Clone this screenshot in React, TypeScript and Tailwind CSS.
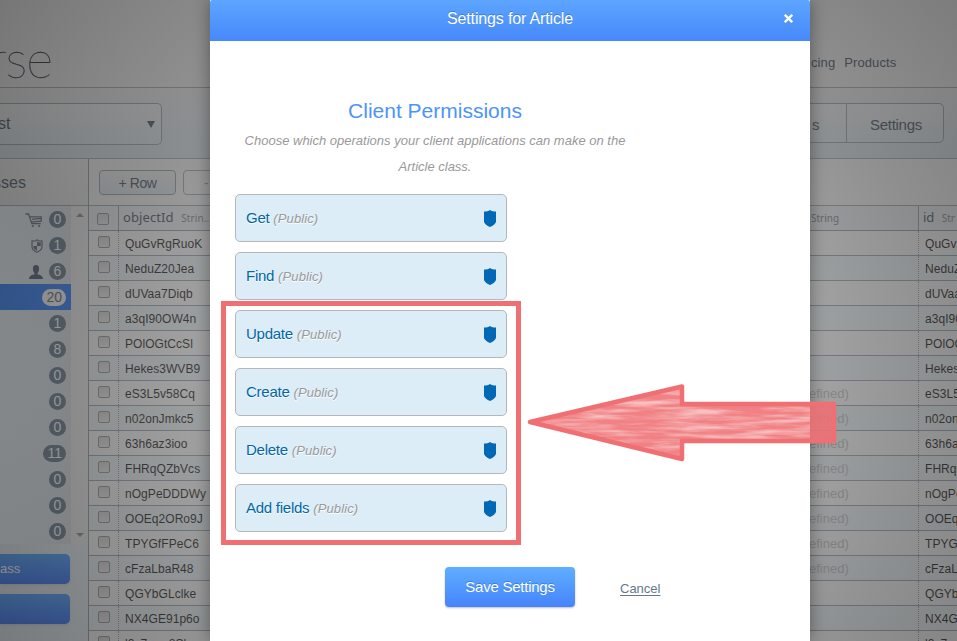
import React from "react";

const ids = [
  "QuGvRgRuoK", "NeduZ20Jea", "dUVaa7Diqb", "a3qI90OW4n", "POlOGtCcSl", "Hekes3WVB9",
  "eS3L5v58Cq", "n02onJmkc5", "63h6az3ioo", "FHRqQZbVcs", "nOgPeDDDWy", "OOEq2ORo9J",
  "TPYGfFPeC6", "cFzaLbaR48", "QGYbGLclke", "NX4GE91p6o", "l2c7wnc8Sk",
];
const counts = ["0", "1", "6", "20", "1", "8", "0", "0", "0", "11", "0", "0", "0"];
const permissions = ["Get", "Find", "Update", "Create", "Delete", "Add fields"];

function CartIcon() {
  return (
    <svg width="18" height="15" viewBox="0 0 18 15" fill="none" stroke="#59697b" strokeWidth="1.3">
      <path d="M.5 1h3.1l3.2 9.6h9M4.6 3.8h11.6v4.4l-10 1M7 6.4l9-1" />
      <circle cx="7.8" cy="13" r="1.1" fill="#59697b" stroke="none" />
      <circle cx="14.2" cy="13" r="1.1" fill="#59697b" stroke="none" />
    </svg>
  );
}

function RoleIcon() {
  return (
    <svg width="12" height="14" viewBox="0 0 12 14" fill="none" stroke="#59697b" strokeWidth="1.2">
      <path d="M6 .8 7.5 2 11 1.8v6C11 10.500 8 12.500 6 13.300 4 12.500 1 10.500 1 7.800v-6L4.500 2Z" />
      <path d="M6 2.500v4.500h3.800V3.300L7.500 3.500ZM6 7v4.800C4 11 2.200 9.500 2.200 7Z" fill="#59697b" stroke="none" />
    </svg>
  );
}

function UserIcon() {
  return (
    <svg width="14" height="14" viewBox="0 0 14 14" fill="#445468">
      <path d="M7 0c2.200 0 3.200 1.500 3.100 3.700C10 5.800 9.200 7.300 8.500 8v1.200c2 .5 5.500 1.300 5.500 4.800H0c0-3.500 3.500-4.300 5.500-4.800V8C4.800 7.300 4 5.800 3.900 3.700 3.800 1.500 4.800 0 7 0Z" />
    </svg>
  );
}

function Checkbox() {
  return <span className="block size-3 rounded-[2px] border border-[#8f8f8f] bg-linear-to-b from-[#d0d0d0] to-[#e4e4e4]" />;
}

function SideList() {
  return (
    <div className="flex h-[338px]">
      <ul className="w-[71px] shrink-0 bg-linear-to-r from-[#ebf2f6] to-[#d3dce2]">
        {counts.map((n, i) => (
          <li
            key={i}
            className={`flex h-[26px] items-center justify-end pr-[5px] ${i === 3 ? "bg-[#2273f4]" : ""}`}
          >
            <span className="mr-1.5 mt-0.5 flex">
              {i === 0 && <CartIcon />}
              {i === 1 && <RoleIcon />}
              {i === 2 && <UserIcon />}
            </span>
            <span
              className={`flex h-[17px] min-w-[17px] items-center justify-center rounded-full px-1 text-[14px] leading-none ${
                i === 3 ? "bg-[#f4f6f7] text-[#556270]" : "bg-[#5d7084] text-white"
              }`}
            >
              {n}
            </span>
          </li>
        ))}
      </ul>
      <div className="flex w-[17px] flex-col items-center justify-between bg-[#e8e7e7] py-[7px]">
        <span className="border-x-4 border-b-4 border-transparent border-b-[#83878b]" />
        <span className="border-x-4 border-t-4 border-transparent border-t-[#83878b]" />
      </div>
    </div>
  );
}

function BlueButton({ label }: { label: string }) {
  return (
    <div className="flex h-[30px] w-[70px] items-center rounded-r-[5px] bg-linear-to-b from-[#3f96fa] to-[#2a66f2] text-[13px] text-white shadow-sm">
      {label}
    </div>
  );
}

function TableRow({ id, i }: { id: string; i: number }) {
  return (
    <div className={`flex h-[25px] shrink-0 border-b border-[#8f9ba8] ${i % 2 ? "bg-[#e5edf0]" : "bg-[#f2f1f1]"}`}>
      <div className="w-[30px] shrink-0 border-r border-dotted border-[#8f9aa4] pl-[9px] pt-[5px]">
        <Checkbox />
      </div>
      <div className="w-[100px] shrink-0 pl-1.5 text-[12px] leading-[26px] tracking-[0.05px] text-[#151515]">{id}</div>
      <div className="ml-[590px] w-[110px] shrink-0 border-r border-dotted border-[#8f9aa4] text-[13px] leading-[26px] text-[#b4b7b9]">
        {i >= 6 && i <= 13 ? "efined)" : ""}
      </div>
      <div className="pl-1.5 text-[12px] leading-[26px] tracking-[0.05px] text-[#151515]">{id}</div>
    </div>
  );
}

function Dashboard() {
  return (
    <div className="flex h-[641px] flex-col overflow-hidden bg-white text-[#434e5d]">
      <header className="flex h-[87px] shrink-0 items-start justify-between bg-[#ededed]">
        <div className="-ml-[21px] mt-[34px] flex h-12 w-[73px] items-center justify-end font-['Lato'] text-[52px] font-[100] leading-none tracking-[-1px] text-[#1d2633] [-webkit-text-stroke:0.3px_#1d2633]">
          rse
        </div>
        <nav className="flex w-[146px] gap-[9px] pt-[53px] text-[13px] tracking-[0.1px]">
          <span>cing</span>
          <span>Products</span>
        </nav>
      </header>
      <div className="flex h-[72px] shrink-0 justify-between border-y border-[#a1a8ae] bg-linear-to-b from-[#ebebec] to-[#d2dde5] pt-[15px]">
        <div className="flex h-[42px] w-[162px] items-center justify-between rounded-r-[5px] border border-l-0 border-[#98a1a8] bg-linear-to-b from-[#efefef] to-[#d8e3e9] pr-1.5 text-[16px]">
          <span className="-ml-0.5">st</span>
          <span className="border-x-[4.500px] border-t-[7px] border-transparent border-t-[#465260]" />
        </div>
        <div className="mr-[13px] flex h-10 w-[144px] rounded-r-[5px] border border-[#98a1a8] bg-linear-to-b from-[#efefef] to-[#d8e3e9] text-[15px] leading-[41px] tracking-[-0.3px]">
          <span className="w-[46px] border-r border-[#98a1a8] pl-[11px]">s</span>
          <span className="flex-1 pl-0.5 text-center">Settings</span>
        </div>
      </div>
      <div className="flex min-h-0 flex-1">
        <aside className="w-[89px] shrink-0 border-r border-[#89959f] bg-[#e0e8ed]">
          <h2 className="-ml-[7px] h-[47px] border-b border-[#98a0a7] bg-linear-to-b from-[#eaeaea] to-[#e0e0e0] text-[16px] leading-[47px]">
            sses
          </h2>
          <SideList />
          <div className="flex flex-col gap-2.5 pt-[10px]">
            <BlueButton label="ass" />
            <BlueButton label="" />
          </div>
        </aside>
        <main className="min-w-0 flex-1 overflow-hidden">
          <div className="flex h-[47px] items-center gap-[7px] border-b border-[#98a0a7] bg-[#ededee] pl-2.5 text-[14px]">
            <div className="h-[25px] w-[77px] rounded border border-[#8e99a2] bg-linear-to-b from-[#eaeaea] to-[#d5e0e6] text-center leading-[25px] tracking-[-0.4px]">
              + Row
            </div>
            <div className="h-[25px] w-[77px] rounded border border-[#9aa4ad] pl-[20px] leading-[24px] text-[#929aa2]">-</div>
          </div>
          <div className="w-[960px]">
            <div className="flex h-[25px] border-b border-[#8b97a2] bg-[#e4e8ea] font-['Noto_Sans'] leading-[23px]">
              <div className="w-[30px] shrink-0 border-r border-[#919ca6] pl-2 pt-[7px]">
                <Checkbox />
              </div>
              <div className="w-[100px] shrink-0 whitespace-nowrap pl-1 text-[13px] tracking-[0.1px]">
                objectId <span className="ml-1 text-[10px] text-[#7b838b]">Strin..</span>
              </div>
              <div className="ml-[592px] w-[108px] shrink-0 border-r border-[#919ca6] text-[10px] leading-[25px] text-[#737b83]">String</div>
              <div className="whitespace-nowrap pl-1 text-[13px]">
                id <span className="ml-1 text-[10px] text-[#7b838b]">Str</span>
              </div>
            </div>
            {ids.map((id, i) => (
              <TableRow key={i} id={id} i={i} />
            ))}
          </div>
        </main>
      </div>
    </div>
  );
}

function Dialog() {
  return (
    <section className="flex h-[641px] w-[600px] flex-col bg-white shadow-[0_0_16px_rgba(0,0,0,0.4)]">
      <header className="flex h-[41px] shrink-0 items-center rounded-t-[2px] bg-linear-to-b from-[#5da5ff] to-[#4788fb] pb-1 text-white">
        <h1 className="flex-1 pl-[26px] text-center text-[16px] tracking-[-0.15px] [text-shadow:0_-1px_0_rgba(0,50,120,0.3)]">
          Settings for Article
        </h1>
        <svg className="mr-[17px]" width="9" height="9" viewBox="0 0 9 9" stroke="white" strokeWidth="2.300">
          <path d="m.8.8 7.400 7.400M8.200.8.8 8.200" />
        </svg>
      </header>
      <div className="ml-[25px] w-[400px] pt-[56px]">
        <h2 className="text-center text-[21px] leading-[28px] text-[#4c93fb]">Client Permissions</h2>
        <p className="mt-[3px] text-center text-[13px] italic leading-[26px] text-[#999]">
          Choose which operations your client applications can make on the
          <br />
          Article class.
        </p>
        <ul className="mt-[14px] flex flex-col gap-2.5">
          {permissions.map((p) => (
            <li
              key={p}
              className="flex h-12 w-[272px] items-center justify-between rounded-[5px] border border-[#b4b8bb] bg-[#ddedf8] pl-2.5 pr-2.5"
            >
              <span className="text-[15px] tracking-[-0.25px] text-[#0067a5] [text-shadow:0_1px_0_white]">
                {p} <em className="text-[13px] tracking-[0.1px] text-[#999]">(Public)</em>
              </span>
              <svg className="mt-px" width="12" height="17" viewBox="0 0 12 17" fill="#0068b4">
                <path d="M6 0C7.500 1 9.500 1.500 12 1.500v10.500C11.500 13.800 9 15.600 6 17 3 15.600.5 13.800 0 12V1.500C2.500 1.500 4.500 1 6 0Z" />
              </svg>
            </li>
          ))}
        </ul>
      </div>
      <footer className="mt-[35px] flex items-center pl-[235px]">
        <button className="h-10 w-[130px] rounded bg-linear-to-b from-[#60aeff] to-[#4783fb] text-[15px] tracking-[-0.25px] text-white shadow-[0_1px_2px_rgba(0,0,0,0.25)] [text-shadow:0_-1px_0_rgba(0,50,120,0.3)]">
          Save Settings
        </button>
        <a className="ml-[45px] mt-[3px] text-[13px] text-[#667889] underline underline-offset-2">Cancel</a>
      </footer>
    </section>
  );
}

function MarkerArrow() {
  const shape = "M530 422 682 386.500V404H834V441H682V459Z";
  return (
    <svg className="absolute inset-0" width="957" height="641" viewBox="0 0 957 641">
      <defs>
        <filter id="chalk" x="0" y="0" width="100%" height="100%">
          <feTurbulence type="fractalNoise" baseFrequency="0.018 0.2" numOctaves="4" seed="12" />
          <feColorMatrix values="0 0 0 0 1  0 0 0 0 1  0 0 0 0 1  2.200 0 0 0 -0.8" />
        </filter>
        <clipPath id="arrow">
          <path d={shape} />
        </clipPath>
      </defs>
      <path d={shape} fill="#ef6f73" fillOpacity=".88" />
      <g clipPath="url(#arrow)">
        <rect x="528" y="384" width="282" height="78" filter="url(#chalk)" opacity=".5" />
      </g>
      <path d={shape} fill="none" stroke="#ef6f73" strokeWidth="4.500" strokeLinejoin="round" />
    </svg>
  );
}

export default function App() {
  return (
    <div className="relative h-[641px] w-[957px] overflow-hidden font-['Liberation_Sans',Arial,sans-serif]">
      <Dashboard />
      <div className="absolute inset-0 bg-[radial-gradient(circle_at_510px_370px,rgba(107,107,107,0.524)_250px,rgba(94,94,94,0.54)_311px,rgba(72,72,72,0.57)_424px,rgba(44,44,44,0.614)_630px)] pl-[210px]">
        <Dialog />
      </div>
      <div className="absolute left-[221px] top-[301px] h-[244px] w-[300px] border-5 border-[#ef6f73]" />
      <MarkerArrow />
    </div>
  );
}
